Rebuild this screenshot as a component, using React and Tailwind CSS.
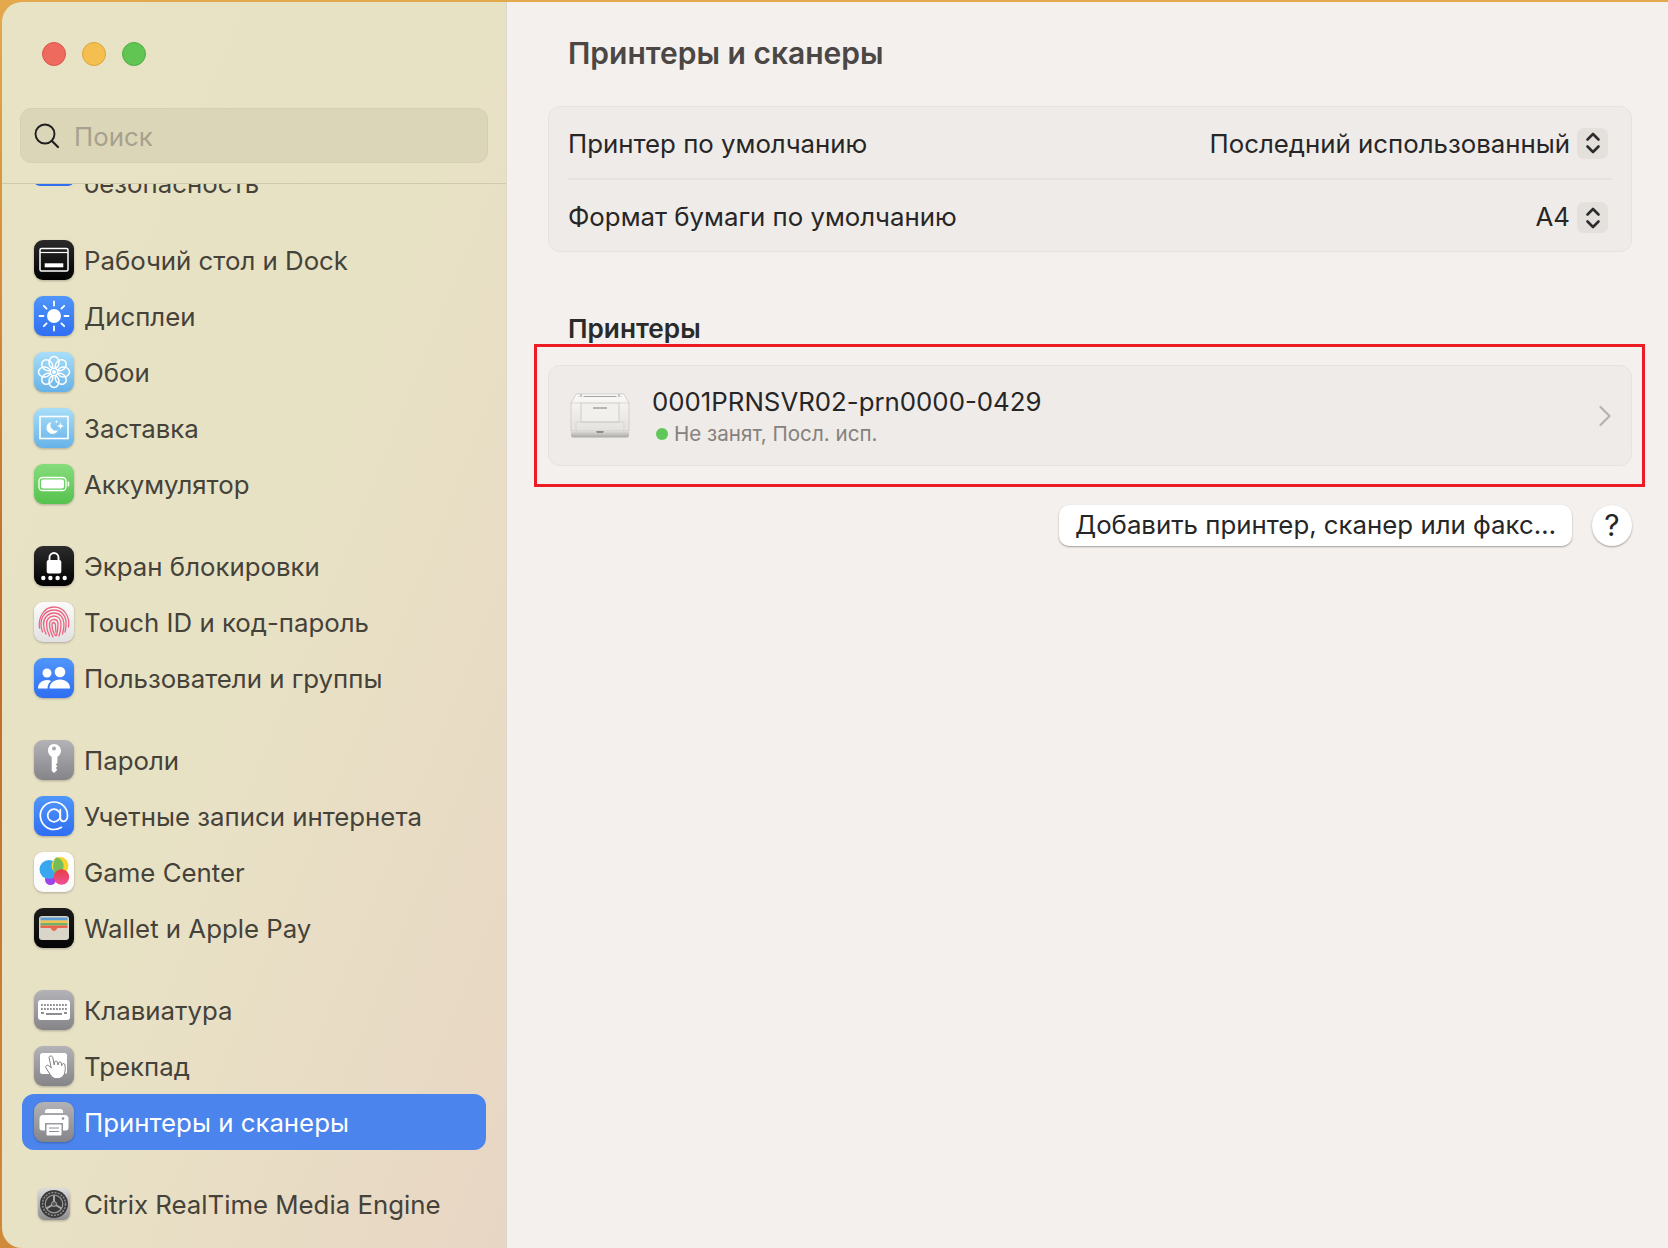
import React from "react";

const Tile = ({ from, to, id, children }) => (
  <svg width="40" height="40" viewBox="0 0 40 40" className="shrink-0 drop-shadow-[0_1px_1px_rgba(0,0,0,0.25)]">
    <defs>
      <linearGradient id={id} x1="0" y1="0" x2="0" y2="1">
        <stop offset="0" stopColor={from} />
        <stop offset="1" stopColor={to} />
      </linearGradient>
    </defs>
    <rect x="0" y="0" width="40" height="40" rx="9" fill={`url(#${id})`} />
    {children}
  </svg>
);

const DockIcon = () => (
  <Tile id="dock" from="#2a2a2a" to="#000000">
    <rect x="6" y="8.5" width="28" height="22.5" rx="1.5" fill="none" stroke="#fff" strokeWidth="1.5" />
    <path d="M6 12.5h28" stroke="#fff" strokeWidth="1.2" />
    <rect x="10.7" y="23.3" width="18.6" height="4" fill="#fff" />
  </Tile>
);

const DisplayIcon = () => (
  <Tile id="display" from="#4f96fa" to="#2f6ef2">
    <circle cx="20" cy="20" r="7" fill="#fff" />
    <g stroke="#fff" strokeWidth="1.8" strokeLinecap="round">
      <path d="M20 5.5v4M20 30.5v4M5.5 20h4M30.5 20h4M9.8 9.8l2.8 2.8M27.4 27.4l2.8 2.8M9.8 30.2l2.8-2.8M27.4 12.6l2.8-2.8" />
    </g>
  </Tile>
);

const WallpaperIcon = () => (
  <Tile id="wallpaper" from="#a8def9" to="#66b2e8">
    <g fill="none" stroke="#fff" strokeWidth="1.5">
      {[0, 45, 90, 135, 180, 225, 270, 315].map((a) => (
        <ellipse key={a} cx="20" cy="10.5" rx="5" ry="6" transform={`rotate(${a} 20 20)`} />
      ))}
    </g>
    <circle cx="20" cy="20" r="2" fill="#fff" />
  </Tile>
);

const ScreenSaverIcon = () => (
  <Tile id="saver" from="#a8def9" to="#66b2e8">
    <rect x="6" y="8.5" width="28" height="22" fill="none" stroke="#fff" strokeWidth="1.6" />
    <path d="M17.5 14a6 6 0 1 0 6.5 8.3a5.5 5.5 0 0 1-6.5-8.3z" fill="#fff" />
    <path d="M26.5 14.5l.9 2.6 2.6.9-2.6.9-.9 2.6-.9-2.6-2.6-.9 2.6-.9zM22.5 12l.5 1.3 1.3.5-1.3.5-.5 1.3-.5-1.3-1.3-.5 1.3-.5z" fill="#fff" />
  </Tile>
);

const BatteryIcon = () => (
  <Tile id="battery" from="#86dc7b" to="#55c24e">
    <rect x="5" y="13.5" width="27" height="13" rx="3.5" fill="none" stroke="#fff" strokeWidth="1.3" />
    <rect x="7" y="15.5" width="23" height="9" rx="2" fill="#fff" />
    <rect x="33.6" y="17.5" width="1.6" height="5" rx="0.8" fill="#fff" />
  </Tile>
);

const LockIcon = () => (
  <Tile id="lock" from="#2c2c2c" to="#000000">
    <path d="M15.5 15v-3.5a4.5 4.5 0 0 1 9 0V15" fill="none" stroke="#fff" strokeWidth="1.9" />
    <rect x="12.7" y="14" width="14.6" height="13.5" rx="2" fill="#fff" />
    <g fill="#fff">
      <circle cx="9.3" cy="32" r="2.2" />
      <circle cx="16.4" cy="32" r="2.2" />
      <circle cx="23.6" cy="32" r="2.2" />
      <circle cx="30.7" cy="32" r="2.2" />
    </g>
  </Tile>
);

const TouchIdIcon = () => (
  <Tile id="touch" from="#fbfbfb" to="#e2e1e1">
    <g fill="none" stroke="#ea6480" strokeWidth="1.3" strokeLinecap="round">
      <path d="M5.500 26c-1.500-10 4-21 14.500-21s16 10 14.500 20" />
      <path d="M8.500 30c-1-2.500-1.500-5-1.500-8 0-8 5.500-14 13-14s13 6 12 16c-.2 2-.5 4-1 6" />
      <path d="M12 32c-1.500-3-2.500-7-2.500-10 0-6 4.500-11 10.500-11s10 5 10 11c0 3-.5 6-1.500 10" />
      <path d="M15.500 34c-1.500-3-3-8-3-12 0-4.500 3-8 7.500-8s7 3.500 7 8c0 4-.5 8-2 12" />
      <path d="M19 35c-2-4-3.500-8.500-3.500-13 0-2.500 2-4.500 4.500-4.500s4 2 4 4.500c0 4-.5 8-1.500 11.500" />
      <path d="M20 20.500c-1 0-2 .5-2 1.500 0 4 1.500 9 3.500 11.500M20 21c1 0 1.500 1 1.500 2 0 3 0 5 .5 7" />
    </g>
  </Tile>
);

const UsersIcon = () => (
  <Tile id="users" from="#4f96fa" to="#2f6ef2">
    <g fill="#fff">
      <circle cx="13" cy="15" r="4.500" />
      <circle cx="26" cy="14" r="5.300" />
      <path d="M4 30.500c0-5 4-8.500 9-8.500 1.500 0 3 .3 4.200 1-2.500 1.800-3.700 4.500-3.700 7.500z" />
      <path d="M15.500 30.500c0-5.500 4.500-9 10.500-9s10 3.500 10 9z" />
    </g>
  </Tile>
);

const KeyIcon = () => (
  <Tile id="key" from="#b3b2b6" to="#858488">
    <path
      fillRule="evenodd"
      fill="#fff"
      d="M20 4c3.900 0 7 3 7 6.800 0 2.600-1.400 4.800-3.600 6V23l-1.700 1.600 1.700 1.700-1.700 1.700 1.700 1.700-3.400 3.300-2.300-2.300V16.800c-2.200-1.200-3.700-3.400-3.700-6C14 7 16.100 4 20 4zM20 6.500a2 2 0 1 0 0 4a2 2 0 0 0 0-4z"
    />
  </Tile>
);

const AtIcon = () => (
  <Tile id="at" from="#4f96fa" to="#2f6ef2">
    <g fill="none" stroke="#fff" strokeWidth="1.700" strokeLinecap="round">
      <circle cx="20" cy="19.500" r="6.300" />
      <path d="M26.300 13.500v8.500c0 2 1.300 3.300 3.200 3.300 2.500 0 4-2.500 4-6 0-7.500-6-13.300-13.500-13.300S6.300 12 6.300 19.500 12.500 33.500 20 33.500c3 0 5.300-.7 7.500-2.200" />
    </g>
  </Tile>
);

const GameCenterIcon = () => (
  <Tile id="game" from="#ffffff" to="#fafafa">
    <defs>
      <linearGradient id="gcPink" x1="0" y1="0" x2="0" y2="1">
        <stop offset="0" stopColor="#e8413f" />
        <stop offset="1" stopColor="#ef4e9b" />
      </linearGradient>
    </defs>
    <circle cx="16.500" cy="27.500" r="5.500" fill="#9d45ea" />
    <circle cx="15" cy="17.500" r="9.500" fill="#39a7f0" />
    <circle cx="26" cy="13.500" r="8.500" fill="#f8d52e" />
    <path d="M22 5.500a8.500 8.500 0 0 1 5.500 14c-2 2-4 3-6.500 3-2.500-4-2.500-13 1-17z" fill="#73bd5a" />
    <circle cx="27.500" cy="25" r="7.700" fill="url(#gcPink)" />
  </Tile>
);

const WalletIcon = () => (
  <Tile id="wallet" from="#1c1c1c" to="#050505">
    <rect x="5" y="8" width="30" height="24" rx="3" fill="#d9d5c8" />
    <rect x="6.500" y="9.500" width="27" height="3" fill="#5c9ed6" />
    <rect x="6.500" y="12.500" width="27" height="2.500" fill="#f2c14e" />
    <rect x="6.500" y="15" width="27" height="2.500" fill="#6eb36a" />
    <rect x="6.500" y="17.500" width="27" height="2.500" fill="#e8674f" />
    <path d="M16 19.500h8l-2 2.500c-1.200 1.200-2.800 1.200-4 0z" fill="#e8674f" />
  </Tile>
);

const KeyboardIcon = () => (
  <Tile id="keyboard" from="#b3b2b6" to="#858488">
    <rect x="4" y="10" width="32" height="20" rx="3" fill="#fff" />
    <g fill="#8e8d92">
      {[8, 11, 14, 17, 20, 23, 26, 29, 32].map((x) => (
        <rect key={x} x={x - 1} y="14" width="1.800" height="2" />
      ))}
      {[8, 11, 14, 17, 20, 23, 26, 29, 32].map((x) => (
        <rect key={x} x={x - 1} y="18" width="1.800" height="2" />
      ))}
      <rect x="7" y="22" width="3" height="2" />
      <rect x="12" y="23" width="16" height="2" />
      <rect x="30" y="22" width="3" height="2" />
    </g>
  </Tile>
);

const TrackpadIcon = () => (
  <Tile id="trackpad" from="#b3b2b6" to="#858488">
    <rect x="6" y="7" width="27" height="21" rx="2.500" fill="#fff" />
    <path
      fill="#fff"
      stroke="#7f7e83"
      strokeWidth="1"
      strokeLinejoin="round"
      d="M15 11.500c0-2 3.500-2 3.800 0l1.400 7.500.4-2.800c.2-1.400 2.700-1.400 2.900 0l.5 2.800.5-2.200c.3-1.300 2.600-1.200 2.800.2l.4 2.600.6-1.400c.5-1.100 2.600-.8 2.700.8.400 3.300.4 6.500-.7 9.300-1.100 2.800-3.900 4.500-7.200 4.500-2.800 0-5-1.100-6.700-3.900l-4.500-7.200c-.9-1.700 1.300-3.300 2.900-2l2.500 2.200z"
    />
  </Tile>
);

const PrinterTileIcon = () => (
  <Tile id="printer" from="#b3b2b6" to="#858488">
    <path d="M11 9.500c0-1.500 1-2.500 2.500-2.500h13c1.500 0 2.500 1 2.500 2.500V11H11z" fill="#fff" />
    <path
      fill="#fff"
      d="M9 13h22c2 0 3.500 1.500 3.500 3.500V26c0 1.500-1 2.500-2.500 2.500h-3V21H11v7.500H8c-1.500 0-2.500-1-2.500-2.500v-9.500C5.500 14.500 7 13 9 13z"
    />
    <circle cx="29" cy="16.500" r="1.300" fill="#8e8d92" />
    <rect x="12.500" y="22.500" width="15" height="11" rx="1" fill="#fff" />
    <path d="M15 26h10M15 29.500h10" stroke="#8e8d92" strokeWidth="1.200" />
  </Tile>
);

const CitrixIcon = () => (
  <svg width="40" height="40" viewBox="0 0 40 40" className="shrink-0 drop-shadow-[0_1px_1px_rgba(0,0,0,0.25)]">
    <defs>
      <linearGradient id="citrixBg" x1="0" y1="0" x2="0" y2="1">
        <stop offset="0" stopColor="#dcdcdc" />
        <stop offset="1" stopColor="#8d8d8d" />
      </linearGradient>
    </defs>
    <rect x="4" y="4" width="32" height="32" rx="7" fill="url(#citrixBg)" />
    <circle cx="20" cy="20" r="14" fill="#3a3a3a" />
    <circle cx="20" cy="20" r="11.500" fill="none" stroke="#8c8c8c" strokeWidth="1.500" strokeDasharray="2 1.200" />
    <circle cx="20" cy="20" r="8.800" fill="none" stroke="#9a9a9a" strokeWidth="1.200" />
    <path d="M20 20V11.500M20 20l-7.400 4.300M20 20l7.400 4.300" stroke="#a8a8a8" strokeWidth="2" />
    <circle cx="20" cy="20" r="2.500" fill="#555" stroke="#a8a8a8" />
  </svg>
);

const SearchIcon = () => (
  <svg width="28" height="28" viewBox="0 0 28 28" fill="none" stroke="#1f1f1f" strokeWidth="1.900" strokeLinecap="round" className="shrink-0">
    <circle cx="12" cy="12" r="9.500" />
    <path d="M19 19l6 6" strokeWidth="2.200" />
  </svg>
);

const Stepper = () => (
  <div className="mr-[4px] flex h-[31px] w-[31px] items-center justify-center rounded-[7px] bg-[#e4e0dc]">
    <svg width="16" height="24" viewBox="0 0 16 24" fill="none" stroke="#2c2c2c" strokeWidth="2.600" strokeLinecap="round" strokeLinejoin="round">
      <path d="M2.500 8.500L8 3l5.500 5.500M2.500 15.500L8 21l5.500-5.500" />
    </svg>
  </div>
);

const LaserPrinter = () => (
  <svg width="62" height="50" viewBox="0 0 62 50" className="shrink-0">
    <defs>
      <linearGradient id="lpBody" x1="0" y1="0" x2="0" y2="1">
        <stop offset="0" stopColor="#faf9f7" />
        <stop offset="1" stopColor="#e4e2df" />
      </linearGradient>
      <linearGradient id="lpBase" x1="0" y1="0" x2="0" y2="1">
        <stop offset="0" stopColor="#e0dedb" />
        <stop offset="1" stopColor="#a9a7a4" />
      </linearGradient>
    </defs>
    <path d="M7 3h48l5 9v28H2V12z" fill="url(#lpBody)" stroke="#c4c2bf" strokeWidth="0.700" />
    <path d="M9 5.500h44M2 12h10M50 12h10" stroke="#cfcdca" strokeWidth="0.700" />
    <path d="M12 3v2.500M50 3v2.500" stroke="#9f9d9a" strokeWidth="1" />
    <path d="M15 5.500h32" stroke="#a5a3a0" strokeWidth="1" />
    <rect x="12" y="12" width="38" height="19" fill="#f2f0ed" stroke="#bfbdba" strokeWidth="0.700" />
    <path d="M24 17h14" stroke="#8f8d8a" strokeWidth="1.200" />
    <path d="M7 31v9M55 31v9M7 31h48" stroke="#cfcdca" strokeWidth="0.700" />
    <path d="M2 40h58v4.500c0 1-1 2-2 2H4c-1 0-2-1-2-2z" fill="url(#lpBase)" />
    <path d="M27 40h8l-1 2h-6z" fill="#8f8d8a" />
  </svg>
);

const groups = [
  [
    ["Рабочий стол и Dock", DockIcon],
    ["Дисплеи", DisplayIcon],
    ["Обои", WallpaperIcon],
    ["Заставка", ScreenSaverIcon],
    ["Аккумулятор", BatteryIcon],
  ],
  [
    ["Экран блокировки", LockIcon],
    ["Touch ID и код-пароль", TouchIdIcon],
    ["Пользователи и группы", UsersIcon],
  ],
  [
    ["Пароли", KeyIcon],
    ["Учетные записи интернета", AtIcon],
    ["Game Center", GameCenterIcon],
    ["Wallet и Apple Pay", WalletIcon],
  ],
  [
    ["Клавиатура", KeyboardIcon],
    ["Трекпад", TrackpadIcon],
    ["Принтеры и сканеры", PrinterTileIcon, true],
  ],
  [["Citrix RealTime Media Engine", CitrixIcon]],
];

const SidebarRow = ({ label, Icon, active }) => (
  <div
    className={
      active
        ? "flex h-[56px] items-center gap-[10px] rounded-[12px] bg-[#4a84ec] pl-[12px] text-white"
        : "flex h-[56px] items-center gap-[10px] pl-[12px] text-[#45423a]"
    }
  >
    <Icon />
    <span className="pt-[2px]">{label}</span>
  </div>
);

const SettingRow = ({ label, value, rowClass, textClass }) => (
  <div className={`flex items-center justify-between ${rowClass}`}>
    <span className={textClass}>{label}</span>
    <div className="flex items-center gap-[7px]">
      <span className={textClass}>{value}</span>
      <Stepper />
    </div>
  </div>
);

export default function App() {
  return (
    <div className="h-[1248px] w-[1668px] overflow-hidden bg-gradient-to-b from-[#e3a94c] via-[#c06a2c] to-[#d08a3c] pl-[2px] pt-[2px] font-['Inter','Liberation_Sans',sans-serif] text-[25.8px]">
      <div className="flex h-[1246px] overflow-hidden rounded-l-[20px]">
        {/* sidebar */}
        <aside className="flex w-[505px] shrink-0 flex-col border-r border-[#ddd8cc] bg-gradient-to-br from-[#e8e3c4] via-[#e8e2c5] to-[#e8d6c4]">
          <div className="flex h-[182px] shrink-0 flex-col border-b border-[#cfc9ae]">
            <div className="flex gap-[16px] pl-[40px] pt-[40px]">
              <div className="h-[24px] w-[24px] rounded-full border border-[#d9534e] bg-[#ee6a5f]" />
              <div className="h-[24px] w-[24px] rounded-full border border-[#dba33b] bg-[#f5bf4f]" />
              <div className="h-[24px] w-[24px] rounded-full border border-[#4fae42] bg-[#61c554]" />
            </div>
            <div className="ml-[18px] mt-[42px] flex h-[55px] w-[468px] items-center gap-[13px] rounded-[11px] border border-[#d5d0b4] bg-[#dbd6b8] pl-[12px] text-[#a6a18e]">
              <SearchIcon />
              <span className="pt-[4px]">Поиск</span>
            </div>
          </div>
          <div className="min-h-0 flex-1 overflow-hidden px-[20px]">
            <div className="flex h-[48px] gap-[10px] overflow-hidden pl-[12px] text-[#45423a]">
              <div className="-mt-[38px] h-[40px] w-[40px] shrink-0 rounded-[6px] bg-[#2f6ff0]" />
              <span className="-mt-[15px] leading-[30px]">безопасность</span>
            </div>
            <div className="flex flex-col gap-[26px]">
              {groups.map((rows, i) => (
                <div key={i} className="flex flex-col">
                  {rows.map(([label, Icon, active]) => (
                    <SidebarRow key={label} label={label} Icon={Icon} active={active} />
                  ))}
                </div>
              ))}
            </div>
          </div>
        </aside>

        {/* main pane */}
        <main className="min-w-0 flex-1 bg-[#f4f0ed] pl-[41px] pr-[36px] text-[#262626]">
          <h1 className="flex h-[104px] items-center pb-[2px] pl-[20px] text-[30px] font-semibold text-[#4a4744]">
            Принтеры и сканеры
          </h1>
          <section className="rounded-[12px] border border-[#e6e2df] bg-[#efebe8] px-[19px]">
            <SettingRow
              label="Принтер по умолчанию"
              value="Последний использованный"
              rowClass="h-[71px] pt-[1px]"
              textClass="pt-[2px]"
            />
            <div className="h-[2px] bg-[#e6e2df]" />
            <SettingRow label="Формат бумаги по умолчанию" value="A4" rowClass="h-[71px] pt-[4px]" textClass="" />
          </section>
          <h2 className="flex h-[113px] items-end pb-[21px] pl-[20px] text-[26.2px] font-semibold leading-[30px] text-[#2a2a2a]">
            Принтеры
          </h2>
          <div className="relative">
            <section className="flex h-[101px] items-center rounded-[12px] border border-[#e6e2df] bg-[#efebe8] pl-[20px] pr-[19px]">
              <LaserPrinter />
              <div className="ml-[21px] flex flex-1 flex-col pt-[2px]">
                <span className="leading-[30px]">0001PRNSVR02-prn0000-0429</span>
                <div className="mt-[4px] flex items-center gap-[6px] pl-[4px] text-[20.6px] leading-[26px] text-[#85817d]">
                  <div className="h-[12px] w-[12px] rounded-full bg-[#5fc858]" />
                  <span>Не занят, Посл. исп.</span>
                </div>
              </div>
              <svg width="14" height="24" viewBox="0 0 14 24" fill="none" stroke="#b7b3b0" strokeWidth="2.200" strokeLinecap="round" strokeLinejoin="round">
                <path d="M2.500 3l9 9-9 9" />
              </svg>
            </section>
            <div className="pointer-events-none absolute -bottom-[21px] -left-[14px] -right-[13px] -top-[21px] border-[3px] border-[#ed1c24]" />
          </div>
          <div className="mt-[39px] flex items-center justify-end gap-[20px]">
            <button className="flex h-[41px] w-[513px] items-center justify-center rounded-[10px] bg-white shadow-[0_1px_2px_rgba(0,0,0,0.35)]">
              Добавить принтер, сканер или факс…
            </button>
            <button className="flex h-[41px] w-[40px] items-center justify-center rounded-full bg-white text-[30px] shadow-[0_1px_2px_rgba(0,0,0,0.35)]">
              ?
            </button>
          </div>
        </main>
      </div>
    </div>
  );
}
